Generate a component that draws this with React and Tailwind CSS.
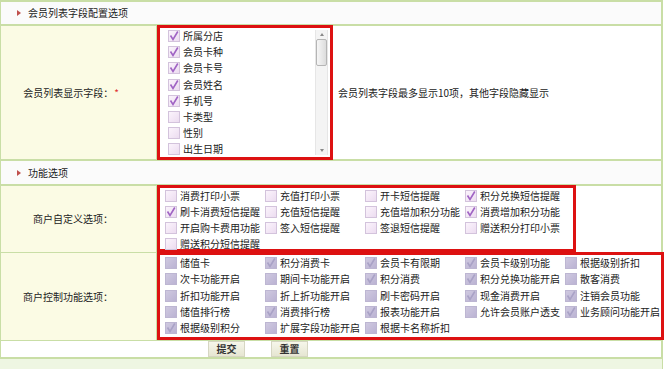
import React from 'react';

const fieldList = [
  { text: '所属分店', checked: true },
  { text: '会员卡种', checked: true },
  { text: '会员卡号', checked: true },
  { text: '会员姓名', checked: true },
  { text: '手机号', checked: true },
  { text: '卡类型', checked: false },
  { text: '性别', checked: false },
  { text: '出生日期', checked: false },
];

const customOptions = [
  ['消费打印小票', false], ['充值打印小票', false], ['开卡短信提醒', false], ['积分兑换短信提醒', true],
  ['刷卡消费短信提醒', true], ['充值短信提醒', false], ['充值增加积分功能', false], ['消费增加积分功能', true],
  ['开启购卡费用功能', false], ['签入短信提醒', false], ['签退短信提醒', false], ['赠送积分打印小票', false],
  ['赠送积分短信提醒', false],
];

const controlOptions = [
  ['储值卡', false], ['积分消费卡', true], ['会员卡有限期', true], ['会员卡级别功能', true], ['根据级别折扣', false],
  ['次卡功能开启', false], ['期间卡功能开启', false], ['积分消费', true], ['积分兑换功能开启', true], ['散客消费', false],
  ['折扣功能开启', false], ['折上折功能开启', false], ['刷卡密码开启', false], ['现金消费开启', true], ['注销会员功能', true],
  ['储值排行榜', false], ['消费排行榜', true], ['报表功能开启', true], ['允许会员账户透支', false], ['业务顾问功能开启', true],
  ['根据级别积分', true], ['扩展字段功能开启', false], ['根据卡名称折扣', false],
];

function CheckBox({ checked, disabled }) {
  return (
    <span
      className={
        disabled
          ? 'relative w-[12px] h-[12px] shrink-0 border border-[#bdb6d2] bg-gradient-to-br from-[#cfc9e0] to-[#bbb3d3]'
          : 'relative w-[12px] h-[12px] shrink-0 border border-[#d3c3dc] bg-gradient-to-br from-[#fbf4fc] to-[#ecdcf0]'
      }
    >
      {checked && (
        <svg viewBox="0 0 12 12" className="absolute -left-[1px] -top-[1px] w-[12px] h-[12px]">
          <path
            d="M2.5 5.5 L5 9.5 L9.8 1.5"
            fill="none"
            stroke={disabled ? '#a9a2c6' : '#a064c4'}
            strokeWidth="1.6"
          />
        </svg>
      )}
    </span>
  );
}

function OptionItem({ text, checked, disabled, rowClass = 'h-[16.5px]' }) {
  return (
    <div className={`flex items-center gap-[3px] whitespace-nowrap ${rowClass}`}>
      <CheckBox checked={checked} disabled={disabled} />
      <span>{text}</span>
    </div>
  );
}

function SectionHeader({ title, className }) {
  return (
    <div className={`flex items-center bg-[#fbfbfb] pl-[16px] ${className}`}>
      <span className="w-0 h-0 border-y-[3px] border-y-transparent border-l-[4px] border-l-[#c0504d] mr-[7px]" />
      <span>{title}</span>
    </div>
  );
}

export default function App() {
  return (
    <div
      className="w-[666px] h-[369px] bg-white overflow-hidden text-[10px] leading-none text-[#222]"
      style={{ fontFamily: '"Noto Sans CJK SC", "Noto Sans", sans-serif' }}
    >
      <div className="w-[663px] bg-[#c9dea6] pt-[2px] pl-[1px] pr-[2px] flex flex-col gap-[2px]">
        <SectionHeader title="会员列表字段配置选项" className="h-[22px]" />

        {/* field list row */}
        <div className="grid grid-cols-[155px_1fr] gap-x-[1px] h-[133px]">
          <div className="bg-[#fbfbe4] flex items-center justify-end pr-[37px]">
            会员列表显示字段：<span className="text-[#e03030] ml-[1px]">*</span>
          </div>
          <div className="bg-white flex items-center">
            <div className="w-[176px] h-[135px] -my-[1px] border-[3px] border-[#dd1111] bg-white flex">
              <div className="flex-1 pl-[8px] overflow-hidden">
                {fieldList.map((f) => (
                  <OptionItem key={f.text} text={f.text} checked={f.checked} rowClass="h-[16.2px]" />
                ))}
              </div>
              <div className="w-[13px] mr-[2px] my-[2px] bg-[#f4f4f4] border-x border-[#e6e6e6] flex flex-col items-center justify-between py-[3px]">
                <span className="w-0 h-0 border-x-[2.5px] border-x-transparent border-b-[3px] border-b-[#888]" />
                <span className="w-[11px] h-[27px] mb-auto mt-[3px] rounded-[2px] border border-[#b5b5b5] bg-gradient-to-r from-[#f6f6f6] to-[#dcdcdc]" />
                <span className="w-0 h-0 border-x-[2.5px] border-x-transparent border-t-[3px] border-t-[#888]" />
              </div>
            </div>
            <span className="ml-[5px]">会员列表字段最多显示10项，其他字段隐藏显示</span>
          </div>
        </div>

        <SectionHeader title="功能选项" className="h-[23px]" />

        {/* custom options */}
        <div className="grid grid-cols-[155px_1fr] gap-x-[1px] h-[65px]">
          <div className="bg-[#fbfbe4] flex items-center justify-end pr-[43px]">商户自定义选项：</div>
          <div className="bg-white">
            <div className="w-[419px] h-[67px] -mt-[1px] border-[3px] border-[#dd1111] pl-[5px] grid grid-cols-[100px_100px_100px_100px] content-start">
              {customOptions.map(([t, c]) => (
                <OptionItem key={t} text={t} checked={c} rowClass="h-[16px]" />
              ))}
            </div>
          </div>
        </div>

        {/* control options */}
        <div className="grid grid-cols-[155px_1fr] gap-x-[1px] h-[86px]">
          <div className="bg-[#fbfbe4] flex items-center justify-end pr-[43px]">商户控制功能选项：</div>
          <div className="bg-white">
            <div className="w-[507px] h-[88px] -mt-[1px] border-[3px] border-[#dd1111] pl-[5px] grid grid-cols-[100px_100px_100px_100px_100px] content-start">
              {controlOptions.map(([t, c]) => (
                <OptionItem key={t} text={t} checked={c} disabled rowClass="h-[16.25px]" />
              ))}
            </div>
          </div>
        </div>

        {/* buttons */}
        <div className="bg-white h-[16px] flex items-center pl-[207px] gap-[26px]">
          {['提交', '重置'].map((b) => (
            <button
              key={b}
              className="w-[37px] h-[16px] border border-[#d6d6c2] bg-gradient-to-b from-[#f6f6ea] to-[#e6e6d2] font-bold text-[10px] text-[#333] flex items-center justify-center"
            >
              {b}
            </button>
          ))}
        </div>

        <div className="bg-[#eef6e2] h-[12px] -mx-[1px]" />
      </div>
    </div>
  );
}
